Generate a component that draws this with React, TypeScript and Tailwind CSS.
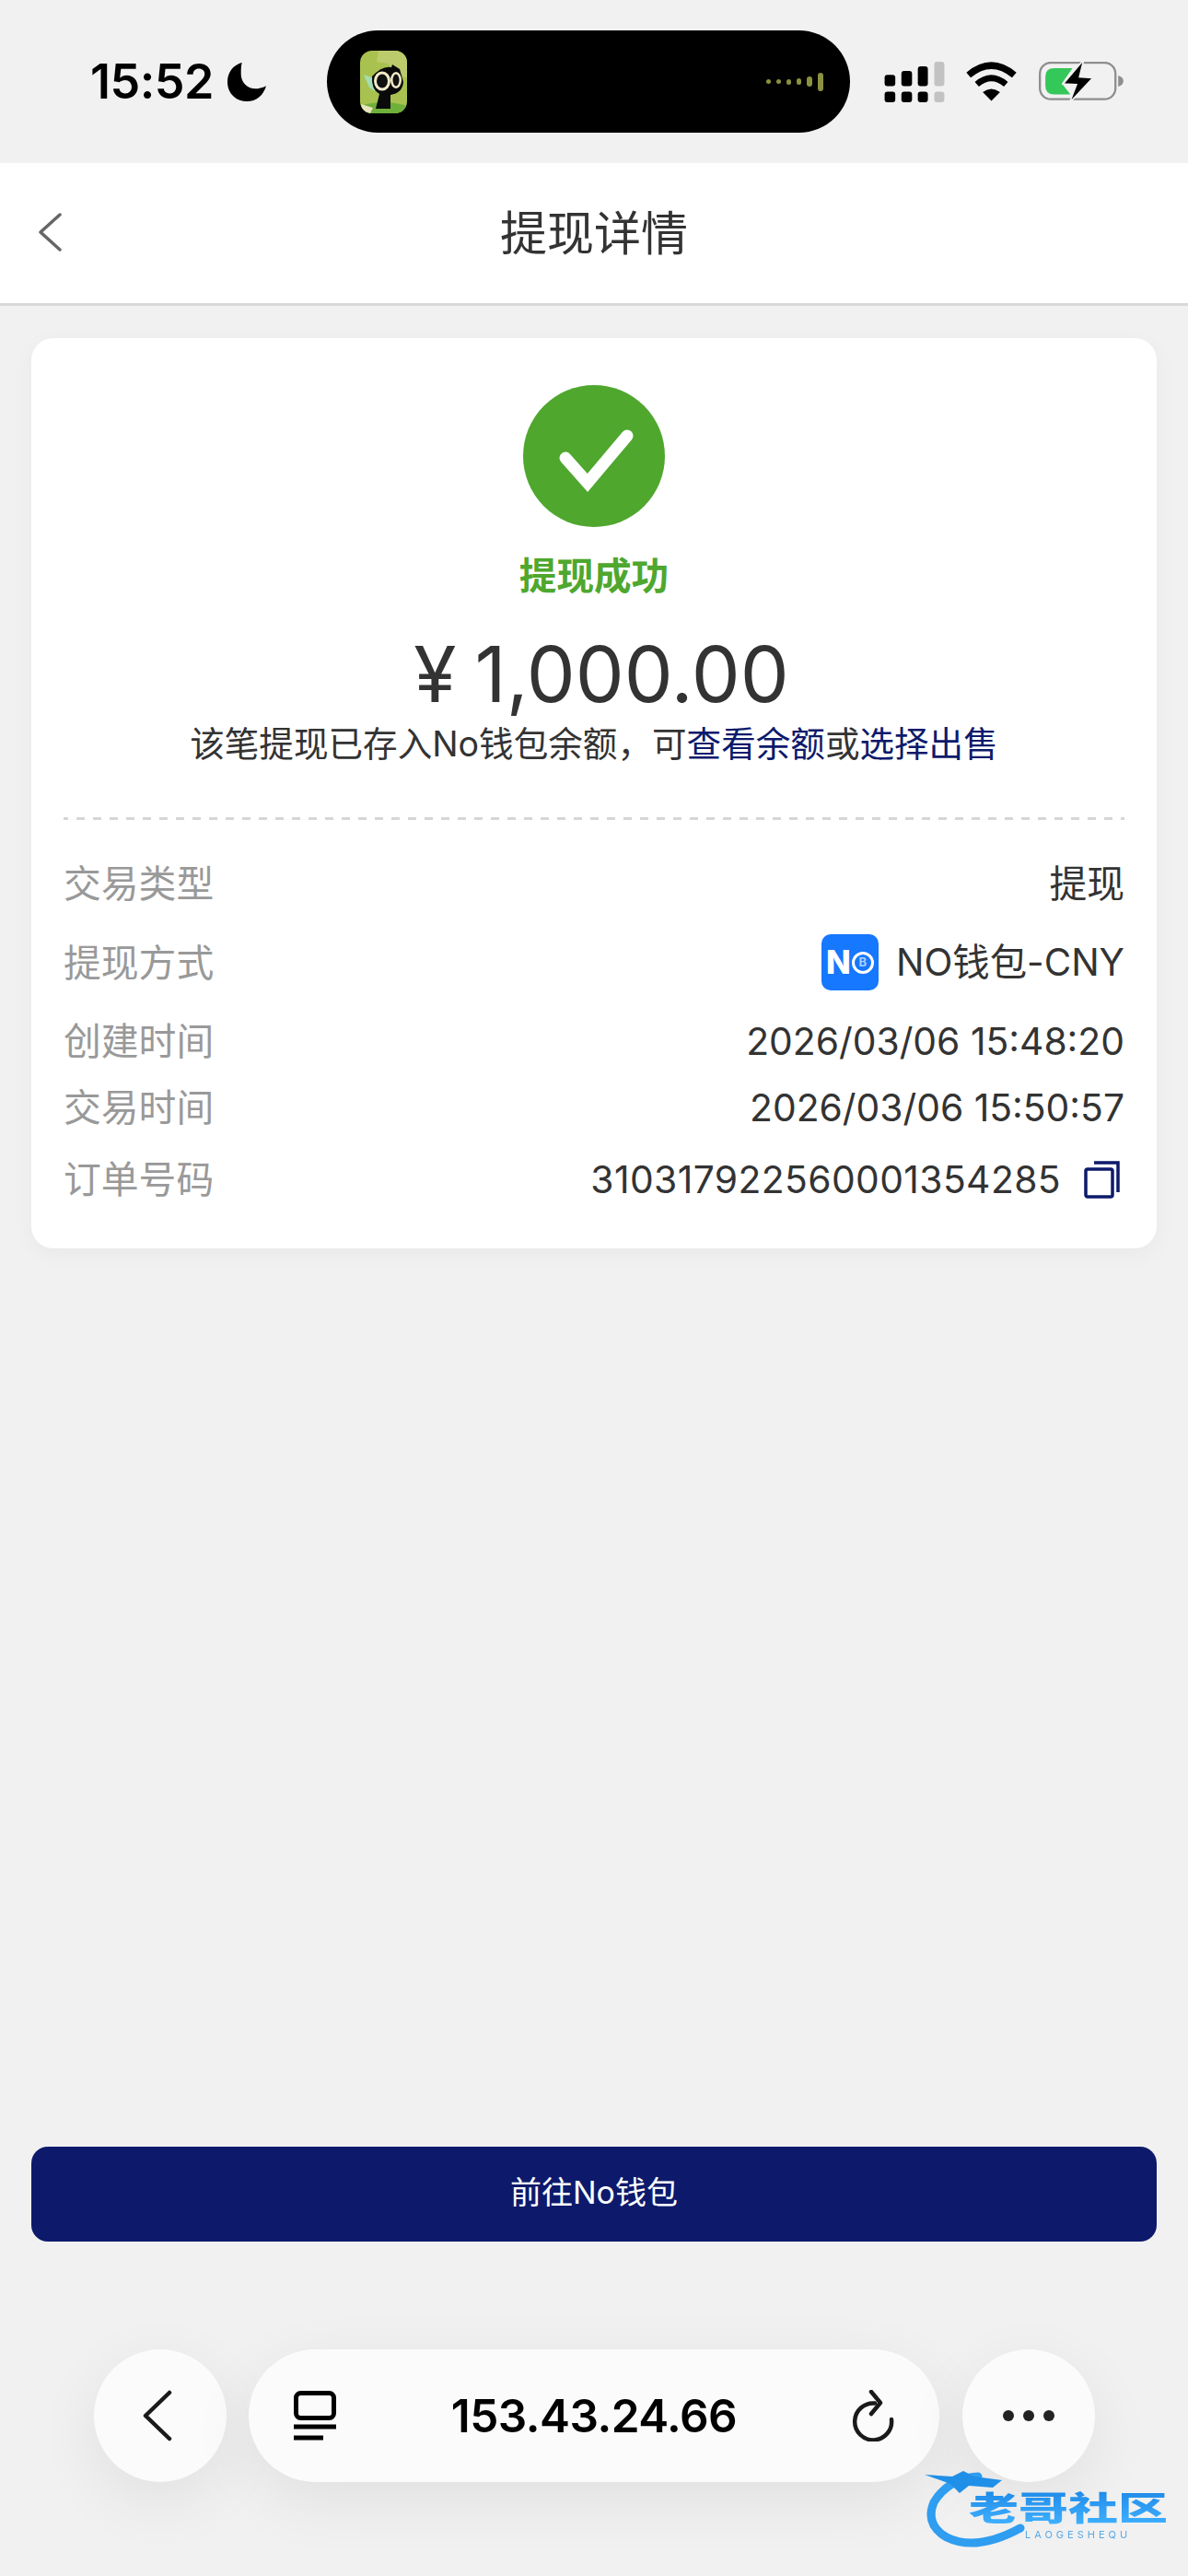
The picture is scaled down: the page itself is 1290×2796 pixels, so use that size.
const rows = [
  { label: '创建时间', value: '2026/03/06 15:48:20', gap: 'mt-[25px]' },
  { label: '交易时间', value: '2026/03/06 15:50:57', gap: 'mt-[12px]' },
];

const StatusBar = () => (
  <div className="h-[177px] flex items-center shrink-0">
    <div className="w-[355px] pl-[98px] flex items-center">
      <span className="text-[52px] leading-[60px] font-semibold text-black tracking-[-0.5px]">15:52</span>
      <svg className="ml-[15px]" width="42" height="42" viewBox="0 0 40 40">
        <path d="M15 0C4 3 0 12 0 20C0 32 9 40 20 40C30 40 37 34 40 24C36 26 32 27 29 27C20 27 14 20 14 12C14 7 14 3 15 0Z" fill="#000" />
      </svg>
    </div>
    {/* dynamic island */}
    <div className="w-[568px] h-[111px] rounded-[56px] bg-black flex items-center justify-between pl-[36px] pr-[29px]">
      <div className="w-[51px] h-[68px] rounded-[13px] overflow-hidden">
        <svg width="51" height="68" viewBox="0 0 51 68">
          <rect width="51" height="68" fill="#a9c24f" />
          <path d="M20 0H51V30L38 24L30 14L18 12Z" fill="#bccb6b" />
          <path d="M0 60Q26 52 51 60V68H0Z" fill="#6fb03a" />
          <path d="M1 58L14 62L11 68H3Z" fill="#e9e3c0" />
          <path d="M4 26L15 30L16 44L10 40Z" fill="#a5dcb4" />
          <path d="M13 28Q24 16 34 18L35 15L43 20L47 34Q46 46 33 48L33 63H17L21 47Q12 42 13 28Z" fill="#0a0a0a" />
          <ellipse cx="24" cy="33" rx="9" ry="10.5" fill="#f1ecc8" />
          <ellipse cx="24" cy="33" rx="6" ry="7.5" fill="#111" />
          <ellipse cx="39" cy="32" rx="6" ry="9" fill="#f1ecc8" />
          <ellipse cx="39" cy="32" rx="3.5" ry="6.5" fill="#111" />
        </svg>
      </div>
      <div className="flex items-center gap-[6px]">
        <span className="w-[5px] h-[5px] rounded-full bg-[#8b9140]" />
        <span className="w-[5px] h-[5px] rounded-full bg-[#8b9140]" />
        <span className="w-[5px] h-[6px] rounded-full bg-[#8b9140]" />
        <span className="w-[5px] h-[7px] rounded-full bg-[#8b9140]" />
        <span className="w-[6px] h-[11px] rounded-full bg-[#8b9140]" />
        <span className="w-[6px] h-[20px] rounded-full bg-[#8b9140]" />
      </div>
    </div>
    <div className="flex items-center pl-[37px]">
      <svg width="66" height="44" viewBox="62 42 196 133">
        <rect x="62" y="85" width="35" height="37" rx="9" fill="#000" />
        <rect x="117" y="72" width="35" height="50" rx="9" fill="#000" />
        <rect x="171" y="57" width="33" height="65" rx="9" fill="#000" />
        <rect x="225" y="42" width="33" height="80" rx="9" fill="#c2c2c2" />
        <rect x="62" y="140" width="35" height="35" rx="9" fill="#000" />
        <rect x="117" y="140" width="35" height="35" rx="9" fill="#000" />
        <rect x="171" y="140" width="33" height="35" rx="9" fill="#000" />
        <rect x="225" y="140" width="33" height="35" rx="9" fill="#c2c2c2" />
      </svg>
      <svg className="ml-[22px]" width="57" height="43" viewBox="325 45 170 128">
        <path d="M336 88Q410 26 484 88" fill="none" stroke="#000" strokeWidth="22" />
        <path d="M363 118Q410 78 457 118" fill="none" stroke="#000" strokeWidth="20" />
        <path d="M382 143Q410 122 438 143L410 172Z" fill="#000" />
      </svg>
      <svg className="ml-[23px]" width="93" height="43" viewBox="565 45 280 130">
        <rect x="568" y="48" width="248" height="120" rx="36" fill="none" stroke="#8e8e8e" strokeWidth="7" />
        <path d="M825 90Q842 95 842 108Q842 122 825 127Z" fill="#8e8e8e" />
        <path d="M615 66H675L640 116L668 152H615Q586 152 586 124V94Q586 66 615 66Z" fill="#34c759" />
        <path d="M712 38L644 118L688 120L665 180L742 98L698 95Z" fill="#000" stroke="#f1f1f1" strokeWidth="5" />
      </svg>
    </div>
  </div>
);

const Row = ({ label, gap, children }: { label: string; gap: string; children: React.ReactNode }) => (
  <div className={`${gap} flex items-center justify-between`}>
    <span className="text-[40.8px] leading-[60px] text-[#999999]">{label}</span>
    {children}
  </div>
);

const App = () => {
  return (
    <div className="relative w-[1290px] h-[2796px] bg-[#f1f1f1] flex flex-col overflow-hidden font-['Inter','Noto_Sans_CJK_SC',sans-serif]">
      <StatusBar />

      {/* header */}
      <div className="relative h-[155px] shrink-0 bg-white border-b-[3px] border-[#d9d9d9] flex items-center justify-center">
        <svg className="absolute left-[39px] top-[53px]" width="30" height="44" viewBox="0 0 30 44">
          <path d="M26 3L5 22L26 41" fill="none" stroke="#666666" strokeWidth="3.5" strokeLinecap="round" strokeLinejoin="round" />
        </svg>
        <span className="text-[51px] leading-[60px] text-[#333333] translate-y-[1px]">提现详情</span>
      </div>

      {/* card */}
      <div className="mx-[34px] mt-[35px] bg-white rounded-[24px] px-[35px] pt-[51px] pb-[45px] shadow-[0_6px_24px_rgba(0,0,0,0.04)] shrink-0">
        <div className="flex flex-col items-center">
          <div className="w-[154px] h-[154px] rounded-full bg-[#4fa72e] flex items-center justify-center">
            <svg width="154" height="154" viewBox="0 0 154 154">
              <path d="M46 79L70 106L113 55" fill="none" stroke="#ffffff" strokeWidth="13" strokeLinecap="round" strokeLinejoin="miter" />
            </svg>
          </div>
          <div className="mt-[26px] text-[40.6px] leading-[56px] font-bold text-[#4fa72e]">提现成功</div>
          <div className="mt-[28px] pl-[16px] text-[84px] leading-[100px] text-[#333333] flex items-center">
            <span>¥</span>
            <span className="ml-[20px]">1,000.00</span>
          </div>
          <div className="mt-[1px] text-[37.6px] leading-[50px] text-[#333333] whitespace-nowrap">
            该笔提现已存入No钱包余额，可<span className="text-[#0d1a6b]">查看余额</span>或<span className="text-[#0d1a6b]">选择出售</span>
          </div>
        </div>

        <div className="mt-[54px] h-[3px] bg-[repeating-linear-gradient(90deg,#d6d6d6_0_5px,transparent_5px_14px,#d6d6d6_14px_18px)]" />

        <Row label="交易类型" gap="mt-[39px]">
          <span className="text-[40.8px] leading-[60px] text-[#333333]">提现</span>
        </Row>
        <Row label="提现方式" gap="mt-[25px]">
          <div className="flex items-center gap-[19px]">
            <div className="w-[62px] h-[61px] rounded-[10px] bg-[#1677ff] flex items-center justify-center gap-[2px]">
              <span className="text-[35px] leading-none font-extrabold text-white tracking-[-1px]">N</span>
              <span className="w-[24px] h-[24px] rounded-full border-[3px] border-white flex items-center justify-center text-[13px] leading-none font-bold text-[#a9cfff]">B</span>
            </div>
            <span className="text-[40.4px] leading-[60px] text-[#333333]">NO钱包-CNY</span>
          </div>
        </Row>
        {rows.map((row) => (
          <Row key={row.label} label={row.label} gap={row.gap}>
            <span className="text-[40.8px] leading-[60px] text-[#333333]">{row.value}</span>
          </Row>
        ))}
        <Row label="订单号码" gap="mt-[18px]">
          <div className="flex items-center gap-[25px] pr-[4px]">
            <span className="text-[40.8px] leading-[60px] text-[#333333] tracking-[0.4px]">310317922560001354285</span>
            <svg width="40" height="42" viewBox="0 0 40 42">
              <rect x="2" y="10" width="29" height="30" rx="2" fill="none" stroke="#0d1a6b" strokeWidth="3.5" />
              <path d="M11 3H37V35" fill="none" stroke="#0d1a6b" strokeWidth="3.5" />
            </svg>
          </div>
        </Row>
      </div>

      <div className="flex-1" />

      {/* action */}
      <div className="mx-[34px] h-[103px] rounded-[18px] bg-[#0d1a6b] flex items-center justify-center shrink-0">
        <span className="text-[34px] leading-[50px] text-white -translate-y-[2px]">前往No钱包</span>
      </div>

      {/* browser toolbar */}
      <div className="mt-[117px] mb-[102px] pl-[102px] flex items-center shrink-0">
        <div className="w-[144px] h-[144px] rounded-full bg-[#fbfbfb] shadow-[0_20px_70px_rgba(0,0,0,0.07)] flex items-center justify-center">
          <svg className="-translate-x-[3px]" width="34" height="56" viewBox="0 0 34 56">
            <path d="M30 3L4 28L30 53" fill="none" stroke="#1a1a1a" strokeWidth="4.5" strokeLinecap="round" strokeLinejoin="round" />
          </svg>
        </div>
        <div className="ml-[24px] w-[750px] h-[144px] rounded-[72px] bg-[#fbfbfb] shadow-[0_20px_70px_rgba(0,0,0,0.07)] flex items-center justify-between pl-[49px] pr-[49px]">
          <svg width="46" height="54" viewBox="0 0 46 54">
            <rect x="2.5" y="2.5" width="41" height="27" rx="5" fill="none" stroke="#000" strokeWidth="5" />
            <path d="M0 39H46" stroke="#000" strokeWidth="5" />
            <path d="M0 51H32" stroke="#000" strokeWidth="5" />
          </svg>
          <span className="text-[49.5px] leading-[60px] font-semibold text-black tracking-[-0.5px]">153.43.24.66</span>
          <svg width="46" height="56" viewBox="0 0 46 56">
            <path d="M25 14.5A20 20 0 1 0 43 32" fill="none" stroke="#1a1a1a" strokeWidth="4.5" strokeLinecap="round" />
            <path d="M21 2L31 14L21 26" fill="none" stroke="#1a1a1a" strokeWidth="4.5" strokeLinecap="round" strokeLinejoin="round" />
          </svg>
        </div>
        <div className="ml-[25px] w-[144px] h-[144px] rounded-full bg-[#fbfbfb] shadow-[0_20px_70px_rgba(0,0,0,0.07)] flex items-center justify-center gap-[10px]">
          <span className="w-[12px] h-[12px] rounded-full bg-[#222222]" />
          <span className="w-[12px] h-[12px] rounded-full bg-[#222222]" />
          <span className="w-[12px] h-[12px] rounded-full bg-[#222222]" />
        </div>
      </div>

      {/* watermark */}
      <div className="absolute left-[1000px] top-[2680px] w-[280px] h-[90px] blur-[0.6px]">
        <svg className="absolute left-0 top-0" width="130" height="90" viewBox="0 0 130 90">
          <path d="M62 8Q30 10 14 36Q4 60 28 74Q60 90 108 64" fill="none" stroke="#2f9df0" strokeWidth="9" strokeLinecap="round" />
          <path d="M4 6L34 8L46 2L58 8L88 12L78 20L52 18L42 26L32 16Z" fill="#1f8fe8" />
        </svg>
        <div className="absolute left-[52px] top-[20px] text-[54px] leading-[60px] font-black whitespace-nowrap origin-top scale-y-[0.68] bg-gradient-to-b from-[#1b87e6] to-[#3fb1ff] bg-clip-text text-transparent font-['Noto_Sans_CJK_SC',sans-serif]">老哥社区</div>
        <div className="absolute left-[113px] top-[65px] text-[11px] leading-[13px] tracking-[4px] text-[#5ba9e6] whitespace-nowrap">LAOGESHEQU</div>
      </div>
    </div>
  );
};

export default App;
